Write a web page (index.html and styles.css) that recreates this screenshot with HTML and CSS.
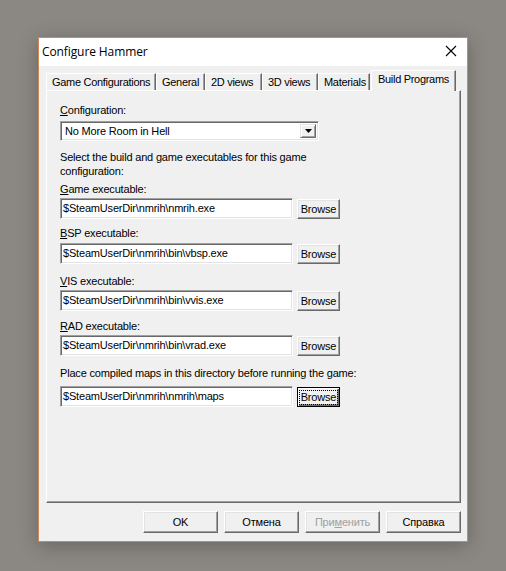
FILE: index.html
```html
<!DOCTYPE html>
<html>
<head>
<meta charset="utf-8">
<link rel="stylesheet" href="styles.css">
</head>
<body>
<div class="window">
  <div class="titlebar">
    <span class="title">Configure Hammer</span>
    <svg class="close" width="12" height="12" viewBox="0 0 12 12"><path d="M1 1 L11 11 M11 1 L1 11" stroke="#000" stroke-width="1.1" fill="none"/></svg>
  </div>
  <div class="client">
    <div class="tabs">
      <div class="tab t1">Game Configurations</div>
      <div class="tab t2">General</div>
      <div class="tab t3">2D views</div>
      <div class="tab t4">3D views</div>
      <div class="tab t5">Materials</div>
      <div class="tab active">Build Programs</div>
    </div>
    <div class="panel">
      <div class="label"><u>C</u>onfiguration:</div>
      <div class="combo">
        <span class="combo-text">No More Room in Hell</span>
        <span class="combo-btn"><svg width="7" height="4" viewBox="0 0 7 4"><path d="M0 0 H7 L3.5 4 Z" fill="#000"/></svg></span>
      </div>
      <div class="desc">Select the build and game executables for this game<br>configuration:</div>

      <div class="label l-game"><u>G</u>ame executable:</div>
      <div class="row r-game"><div class="edit">$SteamUserDir\nmrih\nmrih.exe</div><div class="btn">Browse</div></div>

      <div class="label l-bsp"><u>B</u>SP executable:</div>
      <div class="row r-bsp"><div class="edit">$SteamUserDir\nmrih\bin\vbsp.exe</div><div class="btn">Browse</div></div>

      <div class="label l-vis"><u>V</u>IS executable:</div>
      <div class="row r-vis"><div class="edit">$SteamUserDir\nmrih\bin\vvis.exe</div><div class="btn">Browse</div></div>

      <div class="label l-rad"><u>R</u>AD executable:</div>
      <div class="row r-rad"><div class="edit">$SteamUserDir\nmrih\bin\vrad.exe</div><div class="btn">Browse</div></div>

      <div class="label l-place">Place compiled maps in this directory before running the game:</div>
      <div class="row r-place"><div class="edit">$SteamUserDir\nmrih\nmrih\maps</div><div class="btn focus"><span class="focus-rect">Browse</span></div></div>
    </div>
    <div class="buttons">
      <div class="dbtn">OK</div>
      <div class="dbtn">Отмена</div>
      <div class="dbtn disabled">При<u>м</u>енить</div>
      <div class="dbtn">Справка</div>
    </div>
  </div>
</div>
</body>
</html>
```
FILE: styles.css
```css
html, body {
  margin: 0;
  padding: 0;
}
body {
  background: #8b8883;
  width: 506px;
  height: 571px;
  overflow: hidden;
  font-family: "Liberation Sans", Arial, sans-serif;
  font-size: 11px;
  letter-spacing: -0.18px;
  color: #000;
}
.window {
  margin-left: 38px;
  margin-top: 37px;
  width: 428px;
  height: 503px;
  border: 1px solid #d0875a;
  background: #f0f0f0;
  box-shadow: 0 4px 18px rgba(0,0,0,0.25);
  display: flex;
  flex-direction: column;
}
.titlebar {
  height: 28px;
  background: #fff;
  display: flex;
  align-items: center;
  justify-content: space-between;
  padding: 0 10px 0 3px;
  flex: none;
}
.title {
  font-family: "Open Sans", "Noto Sans", sans-serif;
  font-size: 12px;
  letter-spacing: -0.1px;
  margin-top: -2px;
}
.close {
  display: block;
  margin-top: -3px;
}
.client {
  flex: 1;
  padding: 4px 0 0 7px;
  position: relative;
}
.tabs {
  display: flex;
  height: 20px;
  align-items: flex-end;
  position: relative;
  z-index: 2;
}
.tab {
  height: 17px;
  box-sizing: border-box;
  border-top: 1px solid #fff;
  border-left: 1px solid #fff;
  border-right: 1px solid #696969;
  box-shadow: inset -1px 0 0 #a0a0a0;
  line-height: 16px;
  padding: 0 0 0 5px;
  font-size: 11px;
  letter-spacing: -0.3px;
  white-space: nowrap;
  overflow: hidden;
}
.t1 { width: 110px; }
.t2 { width: 49px; }
.t3 { width: 57px; }
.t4 { width: 56px; }
.t5 { width: 52px; }
.tab.active {
  width: 85px;
  height: 21px;
  margin-left: 1px;
  margin-bottom: -1px;
  background: #f0f0f0;
  line-height: 17px;
  padding-left: 6px;
  padding-bottom: 3px;
}
.panel {
  width: 415px;
  height: 413px;
  box-sizing: border-box;
  border-top: 1px solid #fff;
  border-left: 1px solid #fff;
  border-right: 1px solid #696969;
  border-bottom: 1px solid #696969;
  box-shadow: inset -1px -1px 0 #a0a0a0;
  padding: 13px 0 0 13px;
}
.label {
  height: 13px;
  line-height: 13px;
  white-space: nowrap;
}
.combo {
  margin-top: 4px;
  width: 259px;
  height: 20px;
  box-sizing: border-box;
  background: #fff;
  border-top: 1px solid #a0a0a0;
  border-left: 1px solid #a0a0a0;
  border-right: 1px solid #fff;
  border-bottom: 1px solid #fff;
  box-shadow: inset 1px 1px 0 #696969, inset -1px -1px 0 #e3e3e3;
  display: flex;
  justify-content: space-between;
  padding: 2px;
}
.combo-text {
  line-height: 14px;
  padding-left: 2px;
}
.combo-btn {
  width: 16px;
  height: 14px;
  box-sizing: border-box;
  background: #f0f0f0;
  border-top: 1px solid #e3e3e3;
  border-left: 1px solid #e3e3e3;
  border-right: 1px solid #696969;
  border-bottom: 1px solid #696969;
  box-shadow: inset 1px 1px 0 #fff, inset -1px -1px 0 #a0a0a0;
  display: flex;
  align-items: center;
  justify-content: center;
}
.combo-btn svg { display: block; }
.desc {
  margin-top: 9px;
  line-height: 14px;
}
.l-game { margin-top: 5px; }
.r-game { margin-top: 2px; }
.l-bsp { margin-top: 8px; }
.r-bsp { margin-top: 3px; }
.l-vis { margin-top: 11px; }
.r-vis { margin-top: 2px; }
.l-rad { margin-top: 9px; }
.r-rad { margin-top: 2px; }
.l-place { margin-top: 11px; }
.r-place { margin-top: 6px; }
.row {
  display: flex;
  align-items: flex-start;
  gap: 4px;
  height: 21px;
}
.edit {
  width: 233px;
  height: 21px;
  box-sizing: border-box;
  background: #fff;
  border-top: 1px solid #a0a0a0;
  border-left: 1px solid #a0a0a0;
  border-right: 1px solid #fff;
  border-bottom: 1px solid #fff;
  box-shadow: inset 1px 1px 0 #696969, inset -1px -1px 0 #e3e3e3;
  padding: 0 0 0 2px;
  line-height: 19px;
  white-space: nowrap;
}
.btn {
  width: 43px;
  height: 20px;
  margin-top: 1px;
  box-sizing: border-box;
  background: #f0f0f0;
  border-top: 1px solid #fff;
  border-left: 1px solid #fff;
  border-right: 1px solid #696969;
  border-bottom: 1px solid #696969;
  box-shadow: inset -1px -1px 0 #a0a0a0, inset 1px 1px 0 #e3e3e3;
  text-align: center;
  line-height: 18px;
}
.btn.focus {
  border: 1px solid #000;
  box-shadow: inset 1px 1px 0 #fff, inset -1px -1px 0 #696969, inset -2px -2px 0 #a0a0a0;
  display: flex;
  align-items: center;
  justify-content: center;
}
.focus-rect {
  display: block;
  outline: 1px dotted #000;
  line-height: 13px;
  padding: 0 1px;
}
.buttons {
  display: flex;
  gap: 6px;
  position: absolute;
  right: 6px;
  bottom: 8px;
}
.dbtn {
  width: 75px;
  height: 22px;
  box-sizing: border-box;
  background: #f0f0f0;
  border-top: 1px solid #fff;
  border-left: 1px solid #fff;
  border-right: 1px solid #696969;
  border-bottom: 1px solid #696969;
  box-shadow: inset -1px -1px 0 #a0a0a0, inset 1px 1px 0 #e3e3e3;
  text-align: center;
  line-height: 20px;
}
.dbtn.disabled {
  color: #a0a0a0;
}
```
